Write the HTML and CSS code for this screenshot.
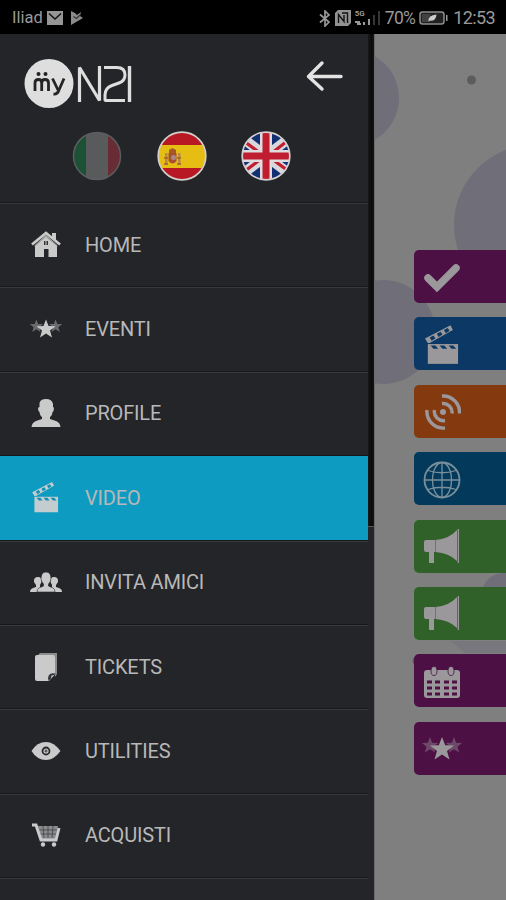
FILE: index.html
```html
<!DOCTYPE html>
<html lang="it">
<head>
<meta charset="utf-8">
<title>myN21</title>
<link rel="stylesheet" href="styles.css">
</head>
<body>
<svg class="defs" width="0" height="0" aria-hidden="true">
  <symbol id="clap" viewBox="0 0 36 42">
    <path d="M3 20H35V41H3Z" fill="currentColor"/>
    <path d="M0 14L27 0L29.500 5L5 19H3Z" fill="currentColor"/>
    <path class="cut" d="M5 13l4-2 2 3-4 2.500zM12.500 9l4-2 2 3-4 2.500zM20 5l4-2 2 3-4 2.500zM6 21.500h5l3 3.500h-5zM15.500 21.500h5l3 3.500h-5zM25 21.500h5l3 3.500h-5z"/>
  </symbol>
  <symbol id="stars" viewBox="0 0 40 24">
    <path d="M8 0l2.200 5.700 6 .2-4.700 3.800 1.700 5.900-5.200-3.400-5.200 3.400 1.700-5.900-4.700-3.800 6-.2z" fill="currentColor" opacity=".42"/>
    <path transform="translate(24)" d="M8 0l2.200 5.700 6 .2-4.700 3.800 1.700 5.900-5.200-3.400-5.200 3.400 1.700-5.900-4.700-3.800 6-.2z" fill="currentColor" opacity=".42"/>
    <path d="M20 0l3.200 8.300 8.800.3-7 5.400 2.500 8.500-7.500-5-7.500 5 2.500-8.500-7-5.400 8.800-.3z" fill="currentColor"/>
  </symbol>
  <symbol id="horn" viewBox="0 0 38 36">
    <path d="M3 11H12V23H11V34H6V23H3Q1 23 1 21V13Q1 11 3 11ZM12.500 11Q26 10 34 1V32Q26 24 12.500 23ZM34.700 0H36V34H34.700Z" fill="currentColor"/>
  </symbol>
</svg>
<div class="screen">
  <header class="status">
    <div class="status-left">
      <span>Iliad</span>
      <svg width="16" height="14" viewBox="0 0 16 14"><path d="M0 0H16V14H0Z" fill="#969696"/><path d="M2 2.500L8 8L14 2.500" fill="none" stroke="#111" stroke-width="1.500"/></svg>
      <svg class="play" width="14" height="14" viewBox="0 0 14 14"><path d="M1 0L5 2L7 4L11 1L10 5L13 7L1 14Z" fill="#8b8b8b"/><path d="M3.500 5.500L6.500 7.500L10 4" fill="none" stroke="#333" stroke-width="1.200"/></svg>
    </div>
    <div class="status-right">
      <svg width="12" height="17" viewBox="0 0 12 17"><path d="M1 4.500L10 12L6 16V1L10 5L1 12.500" fill="none" stroke="#999" stroke-width="1.700"/></svg>
      <svg width="16" height="16" viewBox="0 0 16 16"><path d="M3 0H16V13L13 16H0V3Z" fill="#929292"/><path d="M3.500 13V4.500L9 11.500V5M7 3H12.500V13" fill="none" stroke="#111" stroke-width="1.400"/></svg>
      <div class="signal">
        <span class="net">5G</span>
        <svg width="26" height="16" viewBox="0 0 26 16"><path d="M0 11h5v2H0zM2 13h4v2H2zM8 12h2v3H8zM13 9h2v6h-2z" fill="#999"/><path d="M18 5h2v10h-2zM23 1h2v14h-2z" fill="#353535"/></svg>
      </div>
      <span class="pct">70%</span>
      <svg width="29" height="14" viewBox="0 0 29 14"><rect x="1" y="1" width="24" height="12" rx="2.500" fill="#222" stroke="#8c8c8c" stroke-width="1.500"/><path d="M3 3H11V11H3Z" fill="#414141"/><path d="M27 4h1.500v6H27z" fill="#999"/><path d="M9.500 10.500Q9 4 17.500 3.500Q17 10.500 10.500 9.700Z" fill="#ccc"/></svg>
      <span class="clock">12:53</span>
    </div>
  </header>
  <div class="stage">
    <aside class="drawer">
      <div class="panel">
        <div class="head">
          <div class="brand-row">
            <svg class="logo" width="108" height="52" viewBox="0 0 108 52" role="img">
              <circle cx="25" cy="25.500" r="24.500" fill="#dedede"/>
              <g fill="none" stroke="#242424" stroke-width="2.800" stroke-linejoin="round">
                <path d="M11 33V25Q11 21.500 14.500 21.500Q17.700 21.500 17.700 25V33M17.700 25Q17.700 21.500 21 21.500Q24.500 21.500 24.500 25V33"/>
                <path d="M28.500 20.500L34 32M40 20.500L35 32Q33.500 36.500 29.500 36"/>
              </g>
              <circle cx="14.500" cy="16" r="2" fill="#242424"/><circle cx="21.500" cy="16" r="2" fill="#242424"/>
              <g fill="none" stroke="#dedede" stroke-linejoin="bevel">
                <path stroke-width="3.200" d="M55.500 44V9.500L75.500 42.500V8"/>
                <path stroke-width="3" d="M80 9.500H93Q101 9.500 101 17Q101 23 95 25L88 27.500Q81 30 81 37V42.500H101"/>
                <path stroke-width="3.400" d="M105.500 8V44"/>
              </g>
            </svg>
            <svg class="back" width="38" height="32" viewBox="0 0 38 32"><path d="M35 16.500H3M16 3L2.500 16.500L16 29" fill="none" stroke="#e3e3e3" stroke-width="3.400" stroke-linecap="round" stroke-linejoin="round"/></svg>
          </div>
          <div class="flags">
            <svg class="off" width="50" height="50" viewBox="0 0 50 50"><clipPath id="c"><circle cx="25" cy="25" r="23.500"/></clipPath><g clip-path="url(#c)"><path d="M0 0H50V50H0Z" fill="#585a5c"/><path d="M0 0H14V50H0Z" fill="#1d5135"/><path d="M36 0H50V50H36Z" fill="#682c34"/></g><circle cx="25" cy="25" r="23.500" fill="none" stroke="#5b5e5f" stroke-width="1.500"/></svg>
            <svg width="50" height="50" viewBox="0 0 50 50"><g clip-path="url(#c)"><path d="M0 0H50V50H0Z" fill="#b71824"/><path d="M0 14H50V37H0Z" fill="#e6bd12"/><path d="M8 22h2.500v12H8zM21 22h2.500v12H21z" fill="#b58b45"/><path d="M11.500 22h8v8q-4 5-8 0z" fill="#a8502d"/><path d="M12 19l3.500-2 3.500 2v3h-7z" fill="#a45a25"/><circle cx="16.500" cy="26.500" r="2.500" fill="#a7898c"/><path d="M7 27h4M20 27h4M7 33h4M20 33h4" stroke="#a8602b" stroke-width="1.500"/></g><circle cx="25" cy="25" r="23.800" fill="none" stroke="#d4cfcb" stroke-width="1.700"/></svg>
            <svg width="50" height="50" viewBox="0 0 50 50"><g clip-path="url(#c)"><path d="M0 0H50V50H0Z" fill="#133073"/><path d="M0 6L50 44M50 6L0 44" stroke="#d8d8dc" stroke-width="10"/><path d="M0 8L19 22M31 22L50 7M0 43L20 28M31 28L50 42" stroke="#c21d31" stroke-width="3.200"/><path d="M25 0V50M0 25H50" stroke="#dedcdf" stroke-width="12"/><path d="M25 0V50M0 25H50" stroke="#c01d31" stroke-width="7"/></g><circle cx="25" cy="25" r="23.800" fill="none" stroke="#d4d0d2" stroke-width="1.700"/></svg>
          </div>
        </div>
        <nav class="menu">
          <a class="item"><span class="ico"><svg width="30" height="27" viewBox="0 0 30 27"><path d="M4 14L15 4L26 14V26H17.500V18H13V26H4Z" fill="currentColor"/><path d="M1 13.500L15 2L29 13.500" fill="none" stroke="currentColor" stroke-width="2.800"/><path d="M21 2h4v8l-4-3z" fill="currentColor"/><path d="M3 15.500L15 5.500L27 15.500" fill="none" stroke="#77797b" stroke-width=".7"/><path d="M13 10h1.500v4H13zM15.500 10H17v4h-1.500z" fill="#333"/></svg></span>HOME</a>
          <a class="item"><span class="ico"><svg width="32" height="20"><use href="#stars"/></svg></span>EVENTI</a>
          <a class="item"><span class="ico"><svg width="30" height="30" viewBox="0 0 30 30"><path d="M8.500 5Q9.500 1 15 1Q21 1 22 6V9Q23.500 9 22.500 13Q22 14 21.500 14Q21 18 19 19V21L25 23Q29 24.500 29.500 29H.5Q1 24.500 5 23L11 21V19Q9 18 8.500 14Q7.500 14 7 11Q7 9 8.500 9Z" fill="currentColor"/></svg></span>PROFILE</a>
          <a class="item active"><span class="ico"><svg width="27" height="31"><use href="#clap"/></svg></span>VIDEO</a>
          <a class="item"><span class="ico"><svg width="32" height="21" viewBox="0 0 32 21"><g fill="currentColor"><path d="M4 10Q3.500 5 8 5Q12 5 11.500 10L10 13V15L13 17V20H0Q0 17 3 16L6 15V13ZM28 10Q28.500 5 24 5Q20 5 20.500 10L22 13V15L19 17V20H32Q32 17 29 16L26 15V13Z"/><path stroke="#242528" stroke-width=".6" d="M11 7Q11 0 16 0Q21 0 21 7L20 10L18.500 12V14L23 16Q25 17 25 20H7Q7 17 9 16L13.500 14V12L12 10Z"/></g></svg></span>INVITA AMICI</a>
          <a class="item"><span class="ico"><svg width="24" height="30" viewBox="0 0 24 30"><path d="M4 3L6 1H23V22L21 25V4Z" fill="#8d8d8d"/><path d="M3 3H19Q21 3 21 5V22L15 29H3Q1 29 1 27V5Q1 3 3 3Z" fill="currentColor"/><path d="M14.500 29Q12.500 20 21.500 21.500Z" fill="#34363a"/><path d="M17 26.500L17.500 23.500L20.500 23Z" fill="currentColor"/></svg></span>TICKETS</a>
          <a class="item"><span class="ico"><svg width="30" height="20" viewBox="0 0 30 20"><path d="M.5 10Q6 1 15 1Q23 1 29.500 10Q23 19 15 19Q6 19 .5 10Z" fill="currentColor"/><circle cx="15" cy="10" r="3.500" fill="none" stroke="#27292c" stroke-width="1.800"/><path d="M15 8.500v3M13.500 10h3" stroke="#303234"/></svg></span>UTILITIES</a>
          <a class="item"><span class="ico"><svg width="30" height="24" viewBox="0 0 30 24"><path d="M7 3H27L24 16H10Z" fill="#8a8c8e"/><path d="M8 7H27M9 11H26M12 3L13 15M17 3V15M22 3L21 15" stroke="#404246" stroke-width=".8"/><path d="M1 2H5L10 17H25L28 5" fill="none" stroke="currentColor" stroke-width="3"/><circle cx="12" cy="21.500" r="2.200" fill="currentColor"/><circle cx="23" cy="21.500" r="2.200" fill="currentColor"/></svg></span>ACQUISTI</a>
        </nav>
      </div>
      <div class="edge"></div>
    </aside>
    <main class="page">
      <svg class="backdrop" width="132" height="866" viewBox="374 34 132 866">
        <g fill="#706e78"><circle cx="351" cy="98" r="48"/><circle cx="534" cy="225" r="80"/><circle cx="383" cy="332" r="52" /><path d="M483 587Q490 572 506 573V590H483Z"/></g>
        <circle cx="471.500" cy="80" r="4.500" fill="#5c5c5d"/>
        <path d="M450 641H506V653H465Z" fill="#77777d"/>
        <circle cx="417" cy="661" r="4.500" fill="#5d5960"/>
        <path d="M374.500 34V900" stroke="#6a6a6a"/>
      </svg>
      <div class="tiles">
        <div class="tile purple"><svg width="38" height="32" viewBox="0 0 38 32"><path d="M5 16L14 25L33 6" fill="none" stroke="currentColor" stroke-width="7.500" stroke-linecap="round"/></svg></div>
        <div class="tile blue"><svg class="film" width="34" height="40"><use href="#clap"/></svg></div>
        <div class="tile orange"><svg class="film" width="36" height="36" viewBox="0 0 36 36"><circle cx="18" cy="18" r="3" fill="currentColor"/><g fill="none" stroke="currentColor" stroke-width="3.400"><path d="M17 9.500A9 9 0 0 1 27 19.500M17 2A16.500 16.500 0 0 1 34.500 19.500M9.500 16A9 9 0 0 0 20 26.500M2 16A16.500 16.500 0 0 0 20 34"/></g></svg></div>
        <div class="tile teal"><svg width="38" height="38" viewBox="0 0 38 38"><g fill="none" stroke="#79909b" stroke-width="1.300"><circle cx="19" cy="19" r="17.500" stroke-width="1.800"/><ellipse cx="19" cy="19" rx="9.500" ry="17.500"/><path d="M19 1V37M1 19H37M5 9.500Q19 14 33 9.500M5 28.500Q19 24 33 28.500"/></g></svg></div>
        <div class="tile green"><svg width="38" height="36"><use href="#horn"/></svg></div>
        <div class="tile green"><svg width="38" height="36"><use href="#horn"/></svg></div>
        <div class="tile purple"><svg width="38" height="34" viewBox="0 0 38 34"><rect x="1" y="5" width="36" height="28" rx="3" fill="currentColor"/><path class="cut" d="M4 15.500h5v3H4zm8 0h5v3h-5zm9 0h5v3h-5zm8 0h5v3h-5zM4 21.500h5v3H4zm8 0h5v3h-5zm9 0h5v3h-5zm8 0h5v3h-5zM4 27.500h5v3H4zm8 0h5v3h-5zm9 0h5v3h-5zm8 0h5v3h-5z"/><g fill="currentColor" stroke="#4d1045" stroke-width=".8"><ellipse cx="11" cy="6" rx="3" ry="4.500"/><ellipse cx="28" cy="6" rx="3" ry="4.500"/></g></svg></div>
        <div class="tile purple"><svg class="wide" width="40" height="24"><use href="#stars"/></svg></div>
      </div>
    </main>
  </div>
</div>
</body>
</html>
```
FILE: styles.css
```css
* { box-sizing: border-box; }
body { margin: 0; font-family: Roboto, "Liberation Sans", sans-serif; background: #000; }
svg { display: block; flex: none; }
.defs { position: absolute; }
.screen { width: 506px; height: 900px; overflow: hidden; display: flex; flex-direction: column; }
.status { height: 34px; flex: none; background: #000; color: #999; display: flex; justify-content: space-between; align-items: center; padding: 2px 11px 0 12px; font-size: 17px; line-height: 20px; }
.status-left, .status-right { display: flex; align-items: center; }
.status-left { gap: 4px; font-size: 16.500px; }
.play { margin-left: 3px; }
.status-right { gap: 4px; }
.signal { position: relative; }
.net { position: absolute; left: 0; top: -1px; font-size: 8px; line-height: 9px; font-weight: 700; }
.pct { font-size: 17.500px; letter-spacing: -.7px; }
.clock { font-size: 18px; letter-spacing: -.6px; margin-left: 1px; }
.stage { flex: 1; min-height: 0; display: flex; }
.drawer { width: 374px; flex: none; display: flex; background: #242528; }
.panel { width: 368px; }
.edge { width: 6px; height: 493px; background: linear-gradient(90deg, #17181a, #090a0b 60%, #151618); border-bottom: 1px solid #555; }
.head { height: 168px; padding: 24px 24px 0; }
.brand-row { display: flex; justify-content: space-between; align-items: flex-start; }
.back { margin: 2px 0 0; }
.flags { display: flex; gap: 34.500px; padding: 21px 0 0 48px; }
.menu { height: 698px; overflow: hidden; }
.menu::after { content: ""; display: block; height: 23px; border-top: 1px solid #17181a; box-shadow: inset 0 1px #393a3d; }
.item { height: 84.400px; display: flex; align-items: center; padding: 0 0 0 28px; color: #b8b8b8; font-size: 20px; line-height: 24px; border-top: 1px solid #17181a; box-shadow: inset 0 1px #393a3d; letter-spacing: -.17px; }
.ico { width: 35px; margin-right: 22px; display: flex; justify-content: center; color: #cacaca; }
.active { background: #0e9bc2; box-shadow: none; --cut: #0e8fb5; }
.active .ico { color: #c3ccce; }
.cut { fill: var(--cut); }
.page { position: relative; flex: 1; background: #7f7f7f; overflow: hidden; }
.backdrop { position: absolute; left: 0; top: 0; }
.tiles { position: relative; display: flex; flex-direction: column; gap: 14.400px; padding: 216px 0 0 40px; }
.tile { height: 53px; border-radius: 5px 0 0 5px; display: flex; align-items: center; padding: 2px 0 0 9px; color: #9b989b; }
.purple { background: #4d1045; --cut: #4d1045; }
.blue { background: #0c3865; --cut: #0c3865; }
.orange { background: #84390f; }
.teal { background: #033a5b; }
.green { background: #2f6128; }
.tile .wide { margin-left: -1px; }
.tile .film { margin-left: 2px; }
```
